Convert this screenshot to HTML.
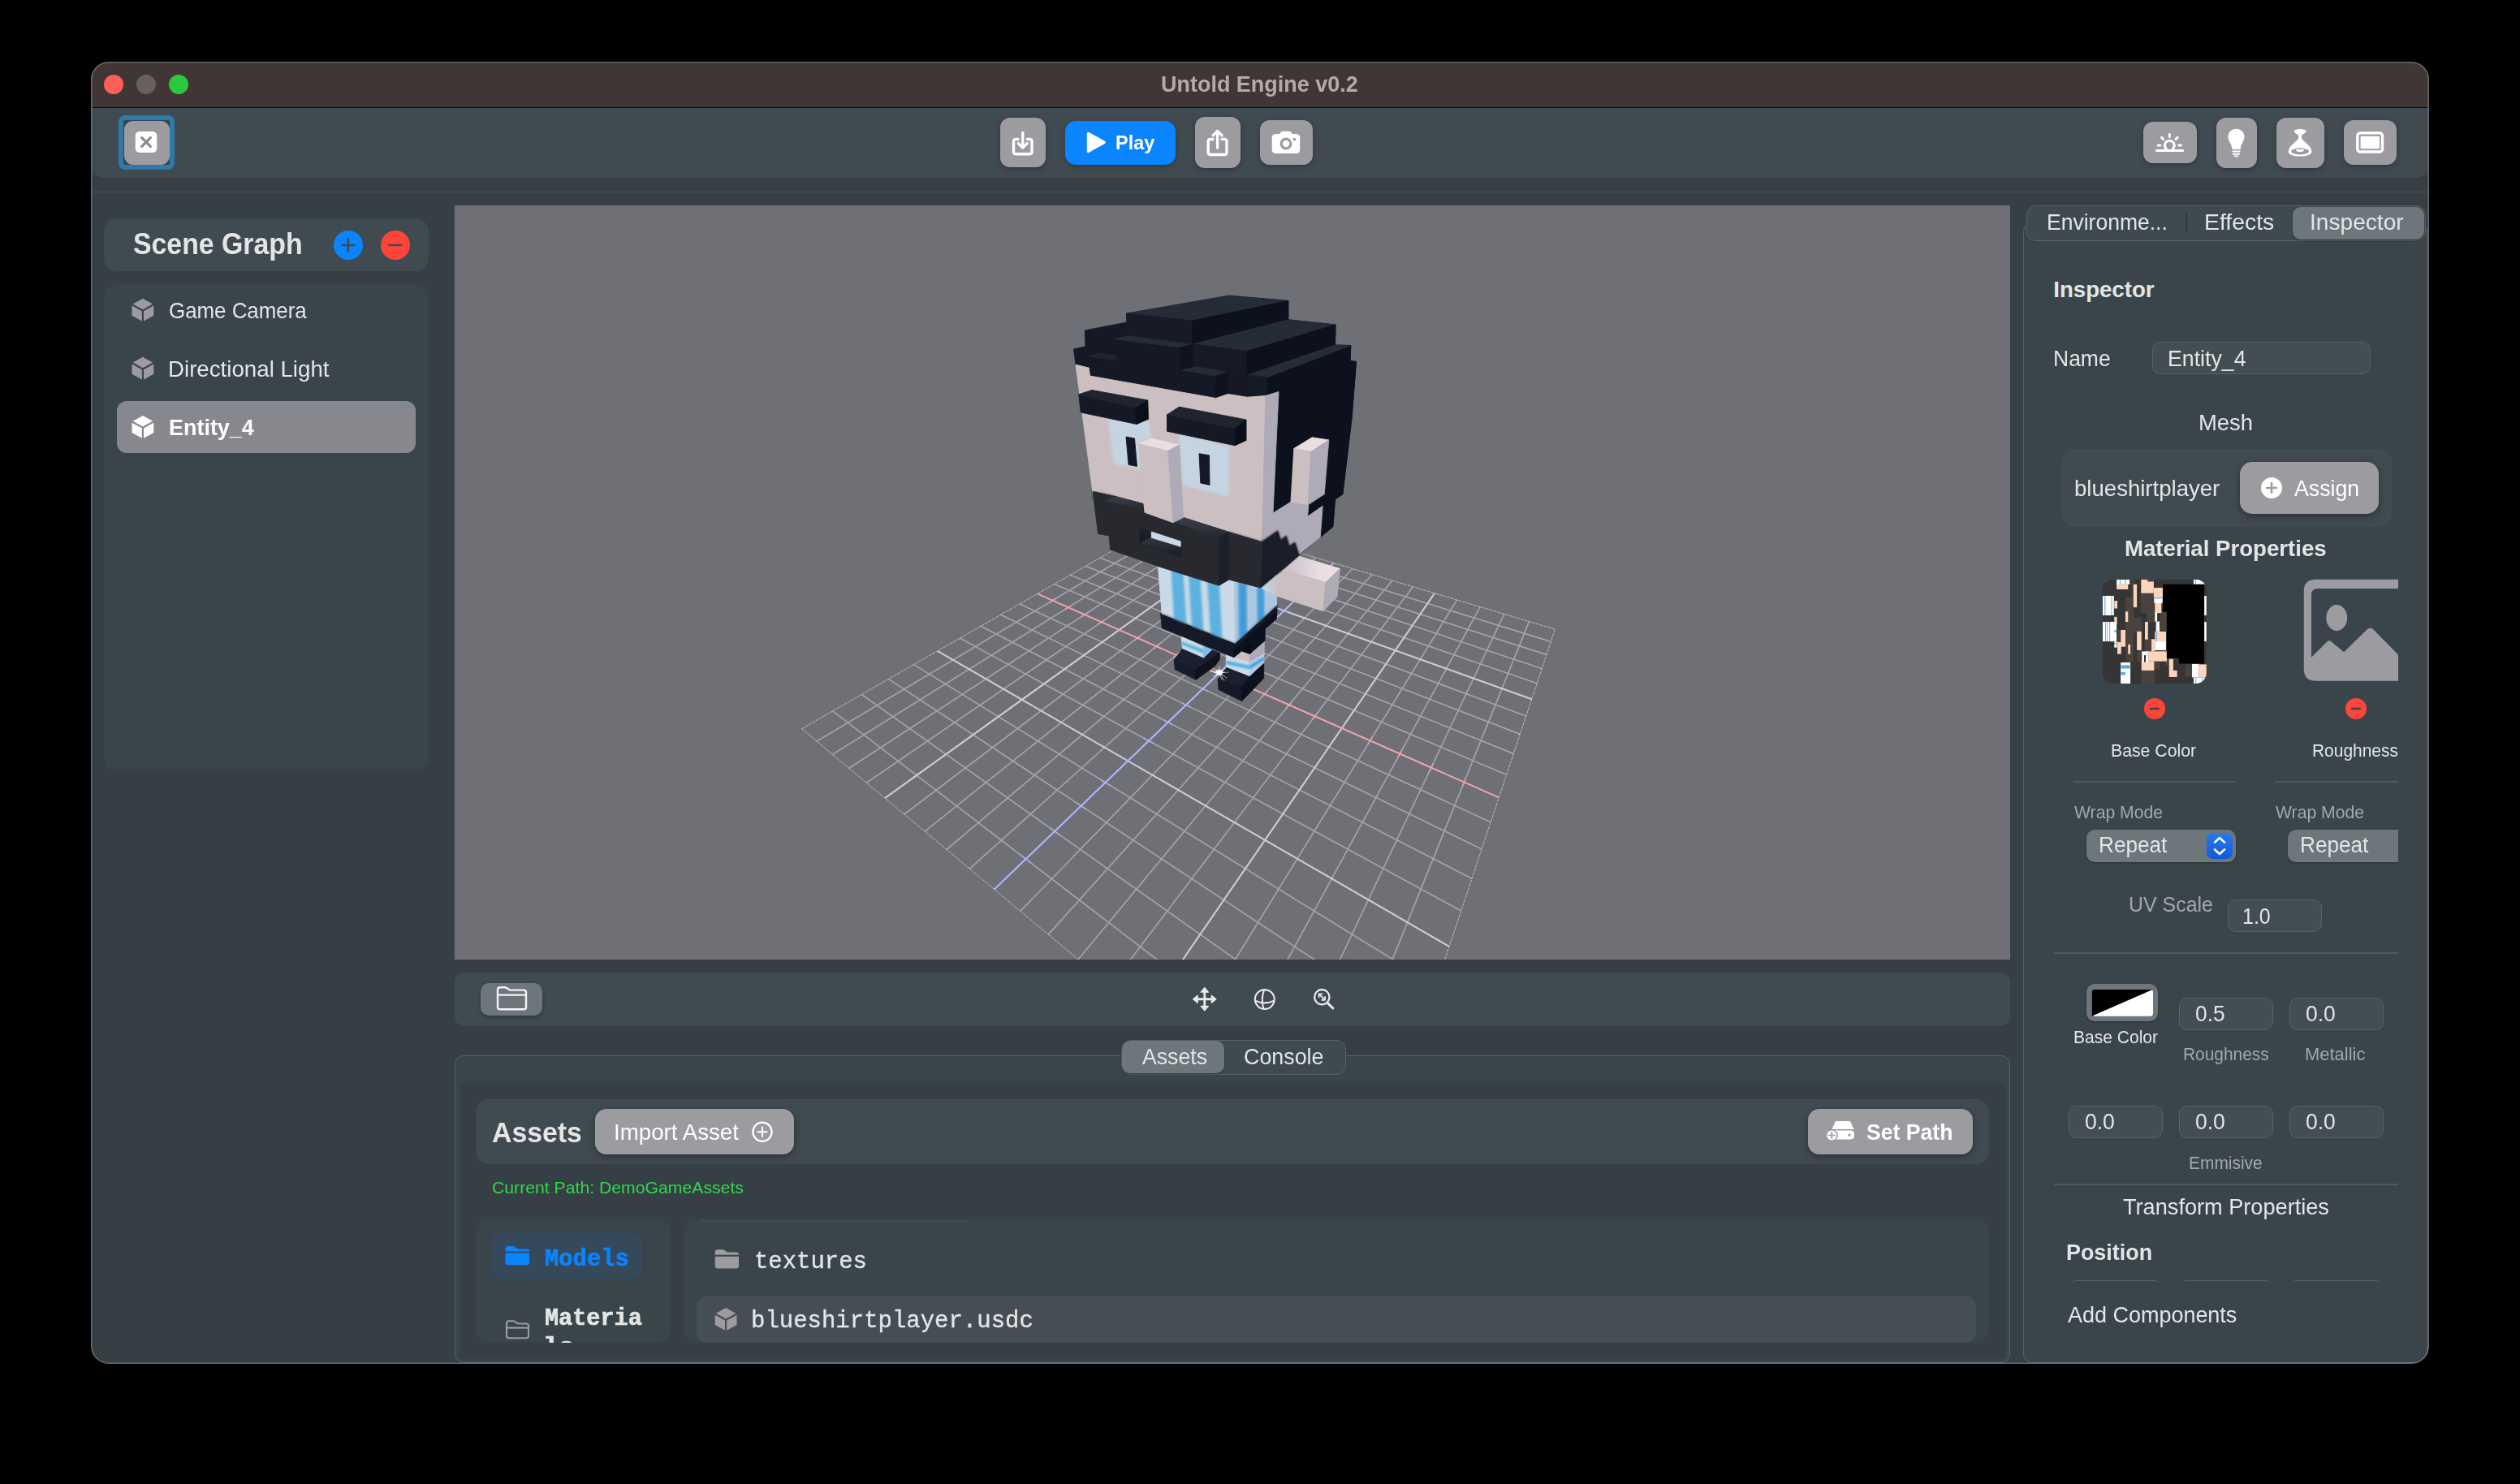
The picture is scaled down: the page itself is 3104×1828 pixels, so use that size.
<!DOCTYPE html>
<html lang="en">
<head>
<meta charset="utf-8">
<title>Untold Engine v0.2</title>
<style>
html,body{margin:0;padding:0;background:#000;}
body{width:3104px;height:1828px;overflow:hidden;position:relative;font-family:"Liberation Sans",sans-serif;}
.a{position:absolute;box-sizing:border-box;}
.t{position:absolute;white-space:pre;line-height:1;transform-origin:0 50%;display:block;}
.s{font-family:"Liberation Sans",sans-serif;}
.m{font-family:"Liberation Mono",monospace;}
.btn{background:#9c9ba0;box-shadow:0 2px 7px rgba(0,0,0,.28);}
.pan{background:#404b51;border-radius:16px;}
.pan2{background:#3a454b;border-radius:16px;}
.fld{background:#434e53;border:1.5px solid #55626a;border-radius:10px;}
.hr{background:#4c595f;height:2px;}
svg{position:absolute;left:0;top:0;overflow:visible;}
</style>
</head>
<body>
<!-- window -->
<div class="a" id="win" style="left:112px;top:76px;width:2880px;height:1603.5px;border-radius:22px;background:#353f45;overflow:hidden;">
<div class="a" style="left:-112px;top:-76px;width:3104px;height:1828px;">
  <!-- title bar -->
  <div class="a" style="left:112px;top:76px;width:2880px;height:56.5px;background:#403634;"></div>
  <div class="a" style="left:112px;top:131.5px;width:2880px;height:1.5px;background:#0b0b0b;"></div>
  <!-- toolbar band -->
  <div class="a" style="left:112.5px;top:133px;width:2878.5px;height:85.75px;background:#404b51;border-radius:0 0 14px 14px;"></div>
  <div class="a" style="left:112px;top:235.5px;width:2880px;height:1.5px;background:#4a575c;"></div>
  <!-- traffic lights -->
  <div class="a" style="left:128px;top:92px;width:24px;height:24px;border-radius:50%;background:#fe5f57;"></div>
  <div class="a" style="left:168px;top:92px;width:24px;height:24px;border-radius:50%;background:#69605e;"></div>
  <div class="a" style="left:208px;top:92px;width:24px;height:24px;border-radius:50%;background:#29c83f;"></div>
  <!-- close (focused) button -->
  <div class="a" style="left:146px;top:142px;width:69px;height:67px;border:6.5px solid #2d7aa8;border-radius:8px;background:#37434a;"></div>
  <div class="a btn" style="left:152.5px;top:148.5px;width:56px;height:54px;border-radius:11px;box-shadow:none;"></div>
  <!-- center buttons -->
  <div class="a btn" style="left:1232px;top:145px;width:56px;height:61px;border-radius:12px;"></div>
  <div class="a btn" style="left:1312px;top:149px;width:136px;height:54px;border-radius:13px;background:#0a84ff;"></div>
  <div class="a btn" style="left:1472px;top:144px;width:56px;height:63px;border-radius:12px;"></div>
  <div class="a btn" style="left:1552px;top:148px;width:65px;height:55px;border-radius:12px;"></div>
  <!-- right buttons -->
  <div class="a btn" style="left:2640px;top:150px;width:66px;height:51px;border-radius:12px;"></div>
  <div class="a btn" style="left:2730px;top:145px;width:50px;height:62px;border-radius:12px;"></div>
  <div class="a btn" style="left:2804px;top:145px;width:59px;height:62px;border-radius:12px;"></div>
  <div class="a btn" style="left:2887px;top:148px;width:65px;height:55px;border-radius:12px;"></div>
  <!-- viewport bg -->
  <div class="a" style="left:560px;top:253px;width:1916px;height:928.75px;background:#6f7076;"></div>
<svg style="position:absolute;left:560px;top:253px;overflow:hidden" width="1916" height="928.75" viewBox="560 253 1916 928.75">
<defs><filter id="b1" x="-10%" y="-10%" width="120%" height="120%"><feGaussianBlur stdDeviation="1.6"/></filter><filter id="b2" x="-10%" y="-10%" width="120%" height="120%"><feGaussianBlur stdDeviation="0.8"/></filter><linearGradient id="gm" x1="0" y1="0" x2="0" y2="1"><stop offset="0" stop-color="#3c4049"/><stop offset="1" stop-color="#25272e"/></linearGradient><linearGradient id="gat" gradientUnits="userSpaceOnUse" x1="1588" y1="700" x2="1626" y2="706"><stop offset="0" stop-color="#ccc5cf"/><stop offset="1" stop-color="#eadfe1"/></linearGradient><linearGradient id="gaf" gradientUnits="userSpaceOnUse" x1="1556" y1="0" x2="1574" y2="0"><stop offset="0" stop-color="#c4d8e6"/><stop offset="1" stop-color="#cbbfc1"/></linearGradient><linearGradient id="gm2" x1="0" y1="0" x2="0.3" y2="1"><stop offset="0" stop-color="#343841"/><stop offset="1" stop-color="#1e212a"/></linearGradient></defs>
<g stroke-linecap="butt">
<line x1="1025.7" y1="875.8" x2="1707.5" y2="1398.4" stroke="#a3a3a7" stroke-width="1.7" stroke-opacity="1" />
<line x1="1006.1" y1="913.1" x2="1463.6" y2="639.8" stroke="#a3a3a7" stroke-width="1.7" stroke-opacity="1" />
<line x1="1061.3" y1="855.5" x2="1730.4" y2="1329.6" stroke="#a3a3a7" stroke-width="1.7" stroke-opacity="1" />
<line x1="1025.5" y1="929.2" x2="1481.2" y2="645.1" stroke="#a3a3a7" stroke-width="1.7" stroke-opacity="1" />
<line x1="1094.5" y1="836.4" x2="1750.7" y2="1268.8" stroke="#a3a3a7" stroke-width="1.7" stroke-opacity="1" />
<line x1="1045.9" y1="946.2" x2="1499.4" y2="650.5" stroke="#a3a3a7" stroke-width="1.7" stroke-opacity="1" />
<line x1="1125.6" y1="818.6" x2="1768.8" y2="1214.5" stroke="#a3a3a7" stroke-width="1.7" stroke-opacity="1" />
<line x1="1067.3" y1="964.2" x2="1518.0" y2="656.1" stroke="#a3a3a7" stroke-width="1.7" stroke-opacity="1" />
<line x1="1182.3" y1="786.1" x2="1799.7" y2="1122.0" stroke="#a3a3a7" stroke-width="1.7" stroke-opacity="1" />
<line x1="1113.9" y1="1003.0" x2="1557.1" y2="667.8" stroke="#a3a3a7" stroke-width="1.7" stroke-opacity="1" />
<line x1="1208.2" y1="771.2" x2="1812.9" y2="1082.2" stroke="#a3a3a7" stroke-width="1.7" stroke-opacity="1" />
<line x1="1139.2" y1="1024.1" x2="1577.5" y2="674.0" stroke="#a3a3a7" stroke-width="1.7" stroke-opacity="1" />
<line x1="1232.7" y1="757.2" x2="1825.0" y2="1045.9" stroke="#a3a3a7" stroke-width="1.7" stroke-opacity="1" />
<line x1="1166.0" y1="1046.5" x2="1598.6" y2="680.3" stroke="#a3a3a7" stroke-width="1.7" stroke-opacity="1" />
<line x1="1255.9" y1="743.9" x2="1836.1" y2="1012.8" stroke="#a3a3a7" stroke-width="1.7" stroke-opacity="1" />
<line x1="1194.4" y1="1070.2" x2="1620.3" y2="686.8" stroke="#a3a3a7" stroke-width="1.7" stroke-opacity="1" />
<line x1="1298.6" y1="719.5" x2="1855.6" y2="954.3" stroke="#a3a3a7" stroke-width="1.7" stroke-opacity="1" />
<line x1="1256.9" y1="1122.4" x2="1666.0" y2="700.5" stroke="#a3a3a7" stroke-width="1.7" stroke-opacity="1" />
<line x1="1318.3" y1="708.2" x2="1864.3" y2="928.4" stroke="#a3a3a7" stroke-width="1.7" stroke-opacity="1" />
<line x1="1291.3" y1="1151.1" x2="1690.0" y2="707.7" stroke="#a3a3a7" stroke-width="1.7" stroke-opacity="1" />
<line x1="1337.1" y1="697.4" x2="1872.3" y2="904.4" stroke="#a3a3a7" stroke-width="1.7" stroke-opacity="1" />
<line x1="1328.1" y1="1181.8" x2="1714.8" y2="715.1" stroke="#a3a3a7" stroke-width="1.7" stroke-opacity="1" />
<line x1="1354.9" y1="687.2" x2="1879.7" y2="882.0" stroke="#a3a3a7" stroke-width="1.7" stroke-opacity="1" />
<line x1="1367.6" y1="1214.8" x2="1740.4" y2="722.8" stroke="#a3a3a7" stroke-width="1.7" stroke-opacity="1" />
<line x1="1388.2" y1="668.1" x2="1893.2" y2="841.7" stroke="#a3a3a7" stroke-width="1.7" stroke-opacity="1" />
<line x1="1455.8" y1="1288.4" x2="1794.5" y2="739.0" stroke="#a3a3a7" stroke-width="1.7" stroke-opacity="1" />
<line x1="1403.8" y1="659.2" x2="1899.2" y2="823.5" stroke="#a3a3a7" stroke-width="1.7" stroke-opacity="1" />
<line x1="1505.3" y1="1329.7" x2="1823.1" y2="747.6" stroke="#a3a3a7" stroke-width="1.7" stroke-opacity="1" />
<line x1="1418.6" y1="650.7" x2="1904.9" y2="806.4" stroke="#a3a3a7" stroke-width="1.7" stroke-opacity="1" />
<line x1="1559.0" y1="1374.6" x2="1852.7" y2="756.4" stroke="#a3a3a7" stroke-width="1.7" stroke-opacity="1" />
<line x1="1432.9" y1="642.5" x2="1910.3" y2="790.4" stroke="#a3a3a7" stroke-width="1.7" stroke-opacity="1" />
<line x1="1617.5" y1="1423.3" x2="1883.4" y2="765.6" stroke="#a3a3a7" stroke-width="1.7" stroke-opacity="1" />
<line x1="987.6" y1="897.7" x2="1681.4" y2="1476.6" stroke="#dedee0" stroke-width="0.9" stroke-opacity="0.75" stroke-dasharray="4 1"/>
<line x1="987.6" y1="897.7" x2="1446.5" y2="634.7" stroke="#dedee0" stroke-width="0.9" stroke-opacity="0.75" stroke-dasharray="4 1"/>
<line x1="1446.5" y1="634.7" x2="1915.4" y2="775.2" stroke="#dedee0" stroke-width="0.9" stroke-opacity="0.75" stroke-dasharray="4 1"/>
<line x1="1681.4" y1="1476.6" x2="1915.4" y2="775.2" stroke="#dedee0" stroke-width="0.9" stroke-opacity="0.75" stroke-dasharray="4 1"/>
<line x1="1154.8" y1="801.8" x2="1785.0" y2="1165.9" stroke="#cdcdd0" stroke-width="2.1" stroke-opacity="1" />
<line x1="1090.0" y1="983.1" x2="1537.3" y2="661.9" stroke="#cdcdd0" stroke-width="2.1" stroke-opacity="1" />
<line x1="1372.0" y1="677.4" x2="1886.7" y2="861.2" stroke="#cdcdd0" stroke-width="2.1" stroke-opacity="1" />
<line x1="1410.1" y1="1250.2" x2="1767.0" y2="730.8" stroke="#cdcdd0" stroke-width="2.1" stroke-opacity="1" />
<line x1="1277.8" y1="731.4" x2="1846.3" y2="982.4" stroke="#f0a6ae" stroke-width="1.9" stroke-opacity="1" />
<line x1="1224.7" y1="1095.5" x2="1642.8" y2="693.5" stroke="#b4b3fb" stroke-width="2.1" stroke-opacity="1" />
<line x1="1292.2" y1="742.2" x2="1300.7" y2="737.1" stroke="#f2a6ad" stroke-width="1.7" stroke-opacity="0.6" />
<line x1="1257.4" y1="1053.4" x2="1269.8" y2="1062.9" stroke="#b0b0f4" stroke-width="1.7" stroke-opacity="0.6" />
<line x1="1311.6" y1="750.8" x2="1320.0" y2="745.6" stroke="#f2a6ad" stroke-width="1.7" stroke-opacity="0.6" />
<line x1="1293.0" y1="1019.7" x2="1305.2" y2="1028.4" stroke="#b0b0f4" stroke-width="1.7" stroke-opacity="0.6" />
<line x1="1331.8" y1="759.8" x2="1340.1" y2="754.4" stroke="#f2a6ad" stroke-width="1.7" stroke-opacity="0.6" />
<line x1="1325.6" y1="988.7" x2="1337.7" y2="996.7" stroke="#b0b0f4" stroke-width="1.7" stroke-opacity="0.6" />
<line x1="1352.7" y1="769.1" x2="1361.0" y2="763.5" stroke="#f2a6ad" stroke-width="1.7" stroke-opacity="0.6" />
<line x1="1355.6" y1="960.2" x2="1367.6" y2="967.6" stroke="#b0b0f4" stroke-width="1.7" stroke-opacity="0.6" />
<line x1="1374.4" y1="778.8" x2="1382.6" y2="772.9" stroke="#f2a6ad" stroke-width="1.7" stroke-opacity="0.6" />
<line x1="1383.4" y1="933.9" x2="1395.2" y2="940.7" stroke="#b0b0f4" stroke-width="1.7" stroke-opacity="0.6" />
<line x1="1397.0" y1="788.9" x2="1405.1" y2="782.8" stroke="#f2a6ad" stroke-width="1.7" stroke-opacity="0.6" />
<line x1="1409.1" y1="909.5" x2="1420.7" y2="915.8" stroke="#b0b0f4" stroke-width="1.7" stroke-opacity="0.6" />
<line x1="1420.5" y1="799.4" x2="1428.5" y2="793.0" stroke="#f2a6ad" stroke-width="1.7" stroke-opacity="0.6" />
<line x1="1433.0" y1="886.8" x2="1444.4" y2="892.7" stroke="#b0b0f4" stroke-width="1.7" stroke-opacity="0.6" />
<line x1="1445.0" y1="810.3" x2="1452.8" y2="803.7" stroke="#f2a6ad" stroke-width="1.7" stroke-opacity="0.6" />
<line x1="1455.3" y1="865.7" x2="1466.5" y2="871.2" stroke="#b0b0f4" stroke-width="1.7" stroke-opacity="0.6" />
<line x1="1470.5" y1="821.7" x2="1478.2" y2="814.8" stroke="#f2a6ad" stroke-width="1.7" stroke-opacity="0.6" />
<line x1="1476.1" y1="846.0" x2="1487.1" y2="851.1" stroke="#b0b0f4" stroke-width="1.7" stroke-opacity="0.6" />
<line x1="1525.0" y1="845.9" x2="1532.3" y2="838.4" stroke="#f2a6ad" stroke-width="1.7" stroke-opacity="0.6" />
<line x1="1513.8" y1="810.2" x2="1524.5" y2="814.7" stroke="#b0b0f4" stroke-width="1.7" stroke-opacity="0.6" />
<line x1="1554.0" y1="858.9" x2="1561.1" y2="851.0" stroke="#f2a6ad" stroke-width="1.7" stroke-opacity="0.6" />
<line x1="1531.0" y1="793.9" x2="1541.4" y2="798.2" stroke="#b0b0f4" stroke-width="1.7" stroke-opacity="0.6" />
<line x1="1584.4" y1="872.4" x2="1591.3" y2="864.2" stroke="#f2a6ad" stroke-width="1.7" stroke-opacity="0.6" />
<line x1="1547.1" y1="778.6" x2="1557.4" y2="782.6" stroke="#b0b0f4" stroke-width="1.7" stroke-opacity="0.6" />
<line x1="1616.3" y1="886.6" x2="1622.8" y2="878.0" stroke="#f2a6ad" stroke-width="1.7" stroke-opacity="0.6" />
<line x1="1562.3" y1="764.2" x2="1572.5" y2="767.9" stroke="#b0b0f4" stroke-width="1.7" stroke-opacity="0.6" />
<line x1="1649.7" y1="901.5" x2="1655.9" y2="892.5" stroke="#f2a6ad" stroke-width="1.7" stroke-opacity="0.6" />
<line x1="1576.7" y1="750.5" x2="1586.7" y2="754.1" stroke="#b0b0f4" stroke-width="1.7" stroke-opacity="0.6" />
<line x1="1684.7" y1="917.1" x2="1690.6" y2="907.6" stroke="#f2a6ad" stroke-width="1.7" stroke-opacity="0.6" />
<line x1="1590.4" y1="737.6" x2="1600.1" y2="740.9" stroke="#b0b0f4" stroke-width="1.7" stroke-opacity="0.6" />
<line x1="1721.6" y1="933.5" x2="1727.0" y2="923.6" stroke="#f2a6ad" stroke-width="1.7" stroke-opacity="0.6" />
<line x1="1603.3" y1="725.3" x2="1612.9" y2="728.5" stroke="#b0b0f4" stroke-width="1.7" stroke-opacity="0.6" />
<line x1="1760.3" y1="950.8" x2="1765.3" y2="940.3" stroke="#f2a6ad" stroke-width="1.7" stroke-opacity="0.6" />
<line x1="1615.5" y1="713.7" x2="1625.0" y2="716.7" stroke="#b0b0f4" stroke-width="1.7" stroke-opacity="0.6" />
<line x1="1801.2" y1="969.0" x2="1805.7" y2="958.0" stroke="#f2a6ad" stroke-width="1.7" stroke-opacity="0.6" />
<line x1="1627.2" y1="702.7" x2="1636.5" y2="705.5" stroke="#b0b0f4" stroke-width="1.7" stroke-opacity="0.6" />
</g>
<g>
<polygon points="1446.3,812.7 1456.6,798.9 1482.7,810.1 1492.6,800.6 1502.4,804.4 1472.6,824.6" fill="#1b2030" stroke="#1b2030" stroke-width="0.9" stroke-linejoin="round" />
<polygon points="1446.3,812.7 1472.6,824.6 1473.0,837.3 1447.2,824.6" fill="#181c29" stroke="#181c29" stroke-width="0.9" stroke-linejoin="round" />
<polygon points="1472.6,824.6 1502.4,804.4 1502.2,812.7 1496.2,820.6 1473.0,837.3" fill="#0e121c" stroke="#0e121c" stroke-width="0.9" stroke-linejoin="round" />
<polygon points="1455.1,783.8 1482.7,796.8 1482.7,810.1 1456.4,798.5" fill="#c9dcea" stroke="#c9dcea" stroke-width="0.9" stroke-linejoin="round" />
<polygon points="1455.4,790.4 1482.7,800.5 1482.7,804.4 1455.9,793.9" fill="#5db2e0" stroke="#5db2e0" stroke-width="0.9" stroke-linejoin="round" filter="url(#b2)"/>
<polygon points="1482.7,796.8 1492.6,800.6 1482.7,810.1" fill="#7cc0e6" stroke="#7cc0e6" stroke-width="0.9" stroke-linejoin="round" />
<polygon points="1519.9,810.1 1529.6,801.5 1539.2,805.4 1539.2,816.7 1510.3,807.7 1510.3,806.6" fill="#cbbfc1" stroke="#cbbfc1" stroke-width="0.9" stroke-linejoin="round" />
<polygon points="1539.2,805.4 1557.4,790.1 1557.1,805.6 1539.2,816.7" fill="#aeaab7" stroke="#aeaab7" stroke-width="0.9" stroke-linejoin="round" />
<polygon points="1510.3,807.3 1539.2,816.1 1539.2,833.6 1510.3,822.2" fill="#c9dcea" stroke="#c9dcea" stroke-width="0.9" stroke-linejoin="round" />
<polygon points="1510.3,814.1 1539.2,820.2 1539.2,824.0 1510.3,817.8" fill="#58afe0" stroke="#58afe0" stroke-width="0.9" stroke-linejoin="round" filter="url(#b2)"/>
<polygon points="1539.2,816.1 1557.1,805.3 1556.7,817.3 1539.2,833.6" fill="#b5cde4" stroke="#b5cde4" stroke-width="0.9" stroke-linejoin="round" />
<polygon points="1539.2,820.2 1557.0,809.2 1556.9,812.9 1539.2,824.0" fill="#4a9edb" stroke="#4a9edb" stroke-width="0.9" stroke-linejoin="round" filter="url(#b2)"/>
<polygon points="1500.2,836.8 1510.3,822.2 1539.2,833.6 1529.6,845.6" fill="#1b2030" stroke="#1b2030" stroke-width="0.9" stroke-linejoin="round" />
<polygon points="1500.2,836.8 1529.6,845.6 1529.6,863.6 1501.1,849.6" fill="#161a27" stroke="#161a27" stroke-width="0.9" stroke-linejoin="round" />
<polygon points="1529.6,845.6 1539.2,833.6 1556.7,817.3 1556.7,835.4 1529.6,863.6" fill="#0c111c" stroke="#0c111c" stroke-width="0.9" stroke-linejoin="round" />
<polygon points="1429.6,755.8 1519.9,791.3 1519.9,809.7 1431.4,773.7" fill="#151a28" stroke="#151a28" stroke-width="0.9" stroke-linejoin="round" />
<polygon points="1519.9,791.3 1572.9,744.8 1572.5,762.3 1558.3,775.1 1558.0,789.1 1539.6,805.3 1529.6,801.8 1519.9,809.7" fill="#0b111f" stroke="#0b111f" stroke-width="0.9" stroke-linejoin="round" />
<polygon points="1530.0,801.2 1539.6,792.8 1539.6,805.3 1529.6,801.8" fill="#070b15" stroke="#070b15" stroke-width="0.9" stroke-linejoin="round" />
<polygon points="1426.2,695.0 1501.2,721.2 1513.8,713.8 1520.5,715.0 1521.5,792.5 1431.2,756.2" fill="#c9d9e7" stroke="#c9d9e7" stroke-width="0.9" stroke-linejoin="round" />
<polygon points="1520.5,715.0 1552.5,723.8 1573.0,706.2 1572.5,746.2 1521.5,792.5" fill="#aac6e1" stroke="#aac6e1" stroke-width="0.9" stroke-linejoin="round" />
<polygon points="1443.0,700.5 1457.0,705.5 1461.0,769.5 1446.5,763.0" fill="#5bb1de" stroke="#5bb1de" stroke-width="0.9" stroke-linejoin="round" filter="url(#b1)"/>
<polygon points="1464.5,708.0 1478.0,713.0 1482.0,777.5 1468.5,772.0" fill="#5bb1de" stroke="#5bb1de" stroke-width="0.9" stroke-linejoin="round" filter="url(#b1)"/>
<polygon points="1487.5,716.5 1501.5,721.0 1505.0,787.0 1491.5,781.2" fill="#5bb1de" stroke="#5bb1de" stroke-width="0.9" stroke-linejoin="round" filter="url(#b1)"/>
<polygon points="1525.8,716.5 1535.0,719.0 1535.5,780.0 1526.5,788.0" fill="#3f9cd9" stroke="#3f9cd9" stroke-width="0.9" stroke-linejoin="round" filter="url(#b1)"/>
<polygon points="1548.8,722.5 1556.5,720.5 1557.0,760.5 1549.5,767.5" fill="#3f9cd9" stroke="#3f9cd9" stroke-width="0.9" stroke-linejoin="round" filter="url(#b1)"/>
<polygon points="1431.2,757.0 1521.2,793.8 1572.5,747.0 1572.5,752.5 1521.2,799.5 1431.2,762.5" fill="#121827" stroke="#121827" stroke-width="0.9" stroke-linejoin="round" filter="url(#b1)"/>
<polygon points="1600.0,685.2 1650.5,700.5 1632.8,717.5 1581.5,702.0" fill="url(#gat)" stroke="url(#gat)" stroke-width="0.9" stroke-linejoin="round" />
<polygon points="1553.2,724.5 1581.5,702.0 1632.8,717.5 1630.0,752.8 1573.5,734.5" fill="url(#gaf)" stroke="url(#gaf)" stroke-width="0.9" stroke-linejoin="round" />
<polygon points="1632.8,717.5 1650.5,700.5 1647.0,735.0 1630.0,752.8" fill="#aeaab7" stroke="#aeaab7" stroke-width="0.9" stroke-linejoin="round" />
</g>
<g>
<polygon points="1325.0,449.2 1322.5,430.0 1337.0,426.8 1336.2,407.0 1388.0,397.0 1387.5,386.2 1513.8,364.2 1586.8,370.5 1586.8,393.8 1645.0,400.0 1644.5,425.0 1663.8,425.5 1663.0,444.5 1670.5,445.5 1665.0,515.0 1653.8,608.8 1644.5,615.0 1641.8,648.8 1626.2,661.8 1552.5,723.8 1552.5,667.5 1536.2,493.8 1497.5,493.8 1342.5,466.2" fill="#151926" stroke="#151926" stroke-width="0.9" stroke-linejoin="round" />
<polygon points="1560.0,465.0 1663.8,425.5 1663.0,444.5 1670.5,445.5 1665.0,515.0 1653.8,608.8 1644.5,615.0 1641.8,648.8 1626.2,661.8 1629.2,623.2 1610.5,636.2 1611.8,622.0 1590.0,618.2 1568.0,632.0 1575.0,482.5 1560.0,486.2" fill="#0c111d" stroke="#0c111d" stroke-width="0.9" stroke-linejoin="round" />
<polygon points="1387.5,386.2 1513.8,364.2 1586.8,370.5 1468.8,395.0" fill="#262b38" stroke="#262b38" stroke-width="0.9" stroke-linejoin="round" />
<polygon points="1387.5,386.2 1468.8,395.0 1468.8,423.8 1388.8,413.8" fill="#171b28" stroke="#171b28" stroke-width="0.9" stroke-linejoin="round" />
<polygon points="1468.8,395.0 1586.8,370.5 1586.8,393.8 1468.8,423.8" fill="#0c111d" stroke="#0c111d" stroke-width="0.9" stroke-linejoin="round" />
<polygon points="1468.8,423.8 1586.8,393.8 1645.0,400.0 1536.2,432.5" fill="#262b38" stroke="#262b38" stroke-width="0.9" stroke-linejoin="round" />
<polygon points="1468.8,423.8 1536.2,432.5 1536.2,460.0 1468.8,451.2" fill="#161a27" stroke="#161a27" stroke-width="0.9" stroke-linejoin="round" />
<polygon points="1536.2,432.5 1645.0,400.0 1644.5,425.0 1536.2,462.0" fill="#0c111d" stroke="#0c111d" stroke-width="0.9" stroke-linejoin="round" />
<polygon points="1372.0,417.5 1389.5,413.8 1468.8,424.2 1453.8,428.0" fill="#262b38" stroke="#262b38" stroke-width="0.9" stroke-linejoin="round" />
<polygon points="1453.8,428.0 1468.8,424.2 1468.8,451.2 1454.5,455.5" fill="#0e131f" stroke="#0e131f" stroke-width="0.9" stroke-linejoin="round" />
<polygon points="1340.0,438.8 1353.8,435.0 1375.0,438.0 1374.5,444.0" fill="#20242f" stroke="#20242f" stroke-width="0.9" stroke-linejoin="round" />
<polygon points="1455.5,455.8 1473.8,451.8 1512.0,458.2 1497.5,463.2" fill="#262b38" stroke="#262b38" stroke-width="0.9" stroke-linejoin="round" />
<polygon points="1497.5,463.2 1512.0,458.2 1512.5,485.5 1497.5,490.5" fill="#0e131f" stroke="#0e131f" stroke-width="0.9" stroke-linejoin="round" />
<polygon points="1536.2,462.0 1644.5,425.0 1663.8,425.5 1560.0,465.0" fill="#262b38" stroke="#262b38" stroke-width="0.9" stroke-linejoin="round" />
<polygon points="1536.2,462.0 1560.0,465.0 1560.0,487.5 1536.2,489.2" fill="#161a27" stroke="#161a27" stroke-width="0.9" stroke-linejoin="round" />
<polygon points="1325.0,449.2 1341.2,453.0 1342.5,463.0 1497.5,490.5 1512.5,485.5 1536.2,489.2 1558.8,487.5 1555.5,640.0 1553.8,672.5 1346.2,608.8" fill="#cbbfc1" stroke="#cbbfc1" stroke-width="0.9" stroke-linejoin="round" />
<polygon points="1558.8,487.5 1575.0,482.5 1568.0,632.0 1590.0,618.2 1611.8,622.0 1610.5,636.2 1629.2,623.2 1626.2,661.8 1600.0,683.0 1595.0,668.0 1588.0,672.5 1584.5,660.0 1577.5,665.0 1573.8,653.8 1553.8,667.5 1555.5,640.0" fill="#aeaab7" stroke="#aeaab7" stroke-width="0.9" stroke-linejoin="round" />
<polygon points="1553.8,667.5 1573.8,653.8 1577.5,665.0 1584.5,660.0 1588.0,672.5 1595.0,668.0 1600.0,683.0 1552.5,723.8" fill="#1a1e29" stroke="#1a1e29" stroke-width="0.9" stroke-linejoin="round" filter="url(#b2)"/>
<polygon points="1553.8,672.5 1572.5,662.5 1595.0,682.5 1600.0,683.5 1552.5,723.8" fill="#1a1e29" stroke="#1a1e29" stroke-width="0.9" stroke-linejoin="round" />
<polygon points="1593.8,552.5 1616.2,538.8 1636.8,542.0 1615.0,556.2" fill="#e9dee0" stroke="#e9dee0" stroke-width="0.9" stroke-linejoin="round" />
<polygon points="1593.8,552.5 1615.0,556.2 1611.2,621.8 1590.0,618.2" fill="#cbbfc1" stroke="#cbbfc1" stroke-width="0.9" stroke-linejoin="round" />
<polygon points="1615.0,556.2 1636.8,542.0 1631.2,608.8 1611.2,621.8" fill="#aeaab7" stroke="#aeaab7" stroke-width="0.9" stroke-linejoin="round" />
<polygon points="1365.0,516.2 1415.0,519.5 1418.0,538.8 1403.8,546.2 1405.0,578.0 1372.5,571.2" fill="#c6d4e1" stroke="#c6d4e1" stroke-width="0.9" stroke-linejoin="round" filter="url(#b1)"/>
<polygon points="1387.0,538.0 1397.5,540.0 1400.5,574.5 1390.0,572.5" fill="#151926" stroke="#151926" stroke-width="0.9" stroke-linejoin="round" />
<polygon points="1452.5,535.0 1513.8,550.5 1513.8,611.2 1457.5,597.5" fill="#c6d4e1" stroke="#c6d4e1" stroke-width="0.9" stroke-linejoin="round" filter="url(#b1)"/>
<polygon points="1477.0,558.8 1489.5,560.8 1490.0,597.5 1478.8,595.0" fill="#151926" stroke="#151926" stroke-width="0.9" stroke-linejoin="round" />
<polygon points="1328.8,485.8 1398.8,502.0 1400.0,522.5 1331.2,508.0" fill="#151926" stroke="#151926" stroke-width="0.9" stroke-linejoin="round" />
<polygon points="1328.8,485.8 1345.0,480.5 1413.8,493.0 1398.8,502.0" fill="#20242f" stroke="#20242f" stroke-width="0.9" stroke-linejoin="round" />
<polygon points="1398.8,502.0 1413.8,493.0 1414.5,516.2 1400.0,522.5" fill="#0a0f1b" stroke="#0a0f1b" stroke-width="0.9" stroke-linejoin="round" />
<polygon points="1437.5,510.8 1521.2,527.5 1521.2,548.8 1437.5,531.2" fill="#151926" stroke="#151926" stroke-width="0.9" stroke-linejoin="round" />
<polygon points="1437.5,510.8 1452.5,501.2 1535.0,517.0 1521.2,527.5" fill="#20242f" stroke="#20242f" stroke-width="0.9" stroke-linejoin="round" />
<polygon points="1521.2,527.5 1535.0,517.0 1535.0,542.5 1521.2,548.8" fill="#0a0f1b" stroke="#0a0f1b" stroke-width="0.9" stroke-linejoin="round" />
<polygon points="1346.2,605.5 1375.0,611.8 1408.0,620.5 1410.0,631.2 1445.0,643.8 1457.5,637.5 1513.8,655.5 1553.8,667.5 1552.5,723.8 1513.8,713.8 1501.2,721.2 1426.2,697.5 1367.5,677.0 1366.2,660.0 1352.5,657.5" fill="#27292f" stroke="#27292f" stroke-width="0.9" stroke-linejoin="round" />
<polygon points="1346.0,606.0 1375.0,612.5 1375.0,618.0 1347.5,614.5" fill="#27292f" stroke="#27292f" stroke-width="0.9" stroke-linejoin="round" filter="url(#b1)"/>
<polygon points="1513.8,656.0 1553.8,668.0 1553.8,690.0 1513.8,680.0" fill="#27292f" stroke="#27292f" stroke-width="0.9" stroke-linejoin="round" filter="url(#b1)"/>
<polygon points="1513.8,664.0 1553.8,676.0 1552.5,723.8 1513.8,713.8" fill="#27292f" stroke="#27292f" stroke-width="0.9" stroke-linejoin="round" />
<polygon points="1362.5,617.0 1375.0,611.8 1408.0,620.5 1408.8,628.0" fill="url(#gm)" stroke="url(#gm)" stroke-width="0.9" stroke-linejoin="round" />
<polygon points="1448.8,643.8 1457.5,637.5 1513.8,655.5 1501.2,662.5" fill="url(#gm)" stroke="url(#gm)" stroke-width="0.9" stroke-linejoin="round" />
<polygon points="1501.2,662.5 1513.8,655.5 1513.8,713.8 1501.2,721.2" fill="#1c202a" stroke="#1c202a" stroke-width="0.9" stroke-linejoin="round" />
<polygon points="1402.5,546.8 1418.0,540.0 1452.5,548.0 1438.8,555.5" fill="#e9dee0" stroke="#e9dee0" stroke-width="0.9" stroke-linejoin="round" />
<polygon points="1402.5,546.8 1438.8,555.5 1445.0,643.8 1410.0,631.2" fill="#cbbfc1" stroke="#cbbfc1" stroke-width="0.9" stroke-linejoin="round" />
<polygon points="1438.8,555.5 1452.5,548.0 1457.5,637.5 1445.0,643.8" fill="#aeaab7" stroke="#aeaab7" stroke-width="0.9" stroke-linejoin="round" />
<polygon points="1403.8,651.2 1455.0,666.2 1455.0,686.2 1403.8,668.8" fill="#1b1e26" stroke="#1b1e26" stroke-width="0.9" stroke-linejoin="round" />
<polygon points="1405.3,668.5 1418.3,662.3 1454.2,673.3 1454.8,686.1" fill="url(#gm2)" stroke="url(#gm2)" stroke-width="0.9" stroke-linejoin="round" />
<polygon points="1418.3,655.1 1454.2,666.8 1454.2,673.3 1418.3,662.3" fill="#c9d9e7" stroke="#c9d9e7" stroke-width="0.9" stroke-linejoin="round" />
</g>
<g stroke="#f4f4f4" stroke-width="0.9" stroke-linecap="round">
<line x1="1501.9" y1="828.2" x2="1490.9" y2="827.2" stroke-opacity=".7"/>
<line x1="1501.9" y1="828.2" x2="1512.9" y2="828.2" stroke-opacity=".7"/>
<line x1="1501.9" y1="828.2" x2="1493.9" y2="823.2" stroke-opacity=".7"/>
<line x1="1501.9" y1="828.2" x2="1509.9" y2="823.2" stroke-opacity=".7"/>
<line x1="1501.9" y1="828.2" x2="1494.9" y2="833.2" stroke-opacity=".7"/>
<line x1="1501.9" y1="828.2" x2="1510.9" y2="835.2" stroke-opacity=".7"/>
<line x1="1501.9" y1="828.2" x2="1504.9" y2="837.2" stroke-opacity=".7"/>
<line x1="1501.9" y1="828.2" x2="1501.9" y2="821.2" stroke-opacity=".7"/>
<line x1="1501.9" y1="828.2" x2="1507.9" y2="838.2" stroke-opacity=".7"/>
<polygon points="1509.3,828.2 1505.1,829.2 1506.5,831.6 1503.2,830.6 1501.9,833.0 1500.6,830.6 1497.3,831.6 1498.7,829.2 1494.5,828.2 1498.7,827.2 1497.3,824.8 1500.6,825.8 1501.9,823.4 1503.2,825.8 1506.5,824.8 1505.1,827.2" fill="#ffffff" stroke="none"/></g>
</svg>
  <!-- left: scene graph -->
  <div class="a pan" style="left:128px;top:269px;width:400px;height:65px;"></div>
  <div class="a" style="left:410.9px;top:284px;width:36px;height:36px;border-radius:50%;background:#0a84ff;"></div>
  <div class="a" style="left:469px;top:284px;width:36px;height:36px;border-radius:50%;background:#ff453a;"></div>
  <div class="a pan2" style="left:128px;top:350px;width:400px;height:600px;"></div>
  <div class="a" style="left:144px;top:494px;width:368px;height:64px;border-radius:12px;background:#87888d;"></div>
  <!-- viewport tool strip -->
  <div class="a" style="left:560px;top:1198px;width:1916px;height:65.75px;background:#404b51;border-radius:12px;"></div>
  <div class="a" style="left:592px;top:1211px;width:76px;height:40px;border-radius:10px;background:#6d777b;box-shadow:0 2px 5px rgba(0,0,0,.3);"></div>
  <!-- assets group box -->
  <div class="a" style="left:560px;top:1300px;width:1916px;height:378.5px;background:#3a454b;border:1.5px solid #56636a;border-radius:11px;"></div>
  <div class="a" style="left:565.75px;top:1333.75px;width:1904.5px;height:340px;background:#353f45;"></div>
  <!-- tab bar -->
  <div class="a" style="left:1380.5px;top:1280.5px;width:277px;height:43.25px;background:#3e4a50;border:1.5px solid #56636a;border-radius:12px;"></div>
  <div class="a" style="left:1382px;top:1282.25px;width:126px;height:39.75px;background:#6d777b;border-radius:10px;box-shadow:0 1px 3px rgba(0,0,0,.3);"></div>
  <!-- assets header -->
  <div class="a pan" style="left:586.25px;top:1353.75px;width:1863.25px;height:80px;"></div>
  <div class="a btn" style="left:733px;top:1366px;width:245px;height:55.75px;border-radius:14px;box-shadow:0 3px 10px rgba(0,0,0,.35);"></div>
  <div class="a btn" style="left:2227px;top:1366px;width:202.5px;height:55.75px;border-radius:14px;box-shadow:0 3px 10px rgba(0,0,0,.35);"></div>
  <!-- folder panel -->
  <div class="a pan2" style="left:586.25px;top:1502px;width:240px;height:151.75px;overflow:hidden;">
    <div class="a" style="left:18.25px;top:16px;width:186.25px;height:57.75px;border-radius:14px;background:#35495b;"></div>
  </div>
  <!-- file panel -->
  <div class="a pan2" style="left:842px;top:1502px;width:1607.5px;height:151.75px;overflow:hidden;">
    <div class="a" style="left:16px;top:94.25px;width:1576.25px;height:57.5px;border-radius:14px;background:#464e55;"></div>
    <div class="a" style="left:16px;top:-10px;width:339px;height:13.5px;border-radius:0 0 10px 10px;background:#404b51;"></div>
  </div>
  <!-- inspector group box -->
  <div class="a" style="left:2492px;top:274px;width:498px;height:1404.5px;background:#3a454b;border:1.5px solid #56636a;border-radius:11px;"></div>
  <!-- tabs -->
  <div class="a" style="left:2496.25px;top:253px;width:491.25px;height:43.5px;background:#3e4a50;border:1.5px solid #56636a;border-radius:12px;"></div>
  <div class="a" style="left:2824px;top:255px;width:162.25px;height:40px;background:#6d777b;border-radius:10px;box-shadow:0 1px 3px rgba(0,0,0,.3);"></div>
  <div class="a" style="left:2692.25px;top:263px;width:1.5px;height:23px;background:#2d373c;"></div>
  <!-- name field -->
  <div class="a fld" style="left:2651px;top:421.25px;width:268.75px;height:39.5px;"></div>
  <!-- mesh row -->
  <div class="a pan" style="left:2539px;top:553px;width:407px;height:95.5px;"></div>
  <div class="a btn" style="left:2759px;top:569px;width:171px;height:64px;border-radius:15px;box-shadow:0 3px 10px rgba(0,0,0,.35);"></div>
  <!-- scroll clip region -->
  <div class="a" style="left:2530px;top:700px;width:424px;height:900px;overflow:hidden;">
   <div class="a" style="left:-2530px;top:-700px;width:3104px;height:1828px;">
    <!-- thumbnail placeholder (svg drawn in icons) -->
    <div class="a" style="left:2554px;top:962px;width:200px;height:2px;background:#4c595f;"></div>
    <div class="a" style="left:2802px;top:962px;width:200px;height:2px;background:#4c595f;"></div>
    <div class="a" style="left:2570px;top:1022px;width:184px;height:40px;border-radius:10px;background:#6d777b;box-shadow:0 1px 3px rgba(0,0,0,.3);"></div>
    <div class="a" style="left:2717.75px;top:1025.75px;width:32.5px;height:32.5px;border-radius:8px;background:linear-gradient(#2a78f0,#0f5bd6);"></div>
    <div class="a" style="left:2818px;top:1022px;width:184px;height:40px;border-radius:10px;background:#6d777b;box-shadow:0 1px 3px rgba(0,0,0,.3);"></div>
    <div class="a" style="left:2530px;top:1172.5px;width:424px;height:2px;background:#4c595f;"></div>
    <div class="a" style="left:2530px;top:1458px;width:424px;height:2px;background:#4c595f;"></div>
   </div>
  </div>
  <!-- fields -->
  <div class="a fld" style="left:2744px;top:1108.25px;width:115.75px;height:39.25px;"></div>
  <div class="a" style="left:2570.25px;top:1212px;width:87.5px;height:46px;border-radius:10px;background:#6d777b;box-shadow:0 1px 3px rgba(0,0,0,.35);"></div>
  <div class="a fld" style="left:2684px;top:1229.25px;width:115.75px;height:39.5px;"></div>
  <div class="a fld" style="left:2820px;top:1229.25px;width:115.75px;height:39.5px;"></div>
  <div class="a fld" style="left:2548px;top:1362.25px;width:115.75px;height:39.5px;"></div>
  <div class="a fld" style="left:2684px;top:1362.25px;width:115.75px;height:39.5px;"></div>
  <div class="a fld" style="left:2820px;top:1362.25px;width:115.75px;height:39.5px;"></div>
  <!-- position fields peeking (clipped) -->
  <div class="a" style="left:2540px;top:1576.6px;width:410px;height:2.2px;overflow:hidden;">
    <div class="a fld" style="left:8px;top:0;width:115.75px;height:40px;background:transparent;"></div>
    <div class="a fld" style="left:144px;top:0;width:115.75px;height:40px;background:transparent;"></div>
    <div class="a fld" style="left:280px;top:0;width:115.75px;height:40px;background:transparent;"></div>
  </div>
</div>
</div>
<!-- window border highlight -->
<div class="a" style="left:112px;top:76px;width:2880px;height:1603.5px;border-radius:22px;box-shadow:inset 0 0 0 1.5px rgba(190,205,210,.33);pointer-events:none;"></div>
<svg width="3104" height="1828" viewBox="0 0 3104 1828" style="position:absolute;left:0;top:0;pointer-events:none">
<defs>
  <g id="cube">
    <path d="M13.4 0.3 L25.6 7 L13.4 13.7 L1.2 7 Z"/>
    <path d="M0 9 L12.3 15.8 L12.3 28 L0 21.2 Z"/>
    <path d="M26.8 9 L14.5 15.8 L14.5 28 L26.8 21.2 Z"/>
  </g>
  <filter id="tb" x="-5%" y="-5%" width="110%" height="110%"><feGaussianBlur stdDeviation="0.45"/></filter>
  <clipPath id="thumbclip"><rect x="2589.75" y="713.75" width="128" height="128.25" rx="13"/></clipPath>
  <clipPath id="inspclip"><rect x="2530" y="700" width="424" height="900"/></clipPath>
</defs>
<!-- close icon -->
<rect x="166.75" y="162" width="26.5" height="26" rx="5" fill="#fff"/>
<path d="M174.6 169.6 L185.4 180.4 M185.4 169.6 L174.6 180.4" stroke="#8b8b90" stroke-width="3.2" stroke-linecap="round" fill="none"/>
<!-- download -->
<g fill="none" stroke="#fff" stroke-width="3.4" stroke-linecap="round" stroke-linejoin="round">
  <path d="M1254 171.5 H1251.5 Q1248.5 171.5 1248.5 174.5 V186.7 Q1248.5 189.7 1251.5 189.7 H1268 Q1271 189.7 1271 186.7 V174.5 Q1271 171.5 1268 171.5 H1265.5"/>
  <path d="M1259.75 163.5 V181.5 M1254.3 176.6 L1259.75 182 L1265.2 176.6"/>
</g>
<!-- play triangle -->
<path d="M1340.5 164.5 L1360 175.4 L1340.5 186.3 Z" fill="#fff" stroke="#fff" stroke-width="3.5" stroke-linejoin="round"/>
<!-- share -->
<g fill="none" stroke="#fff" stroke-width="3.4" stroke-linecap="round" stroke-linejoin="round">
  <path d="M1494 171.5 H1491.2 Q1488.2 171.5 1488.2 174.5 V187.5 Q1488.2 190.5 1491.2 190.5 H1508 Q1511 190.5 1511 187.5 V174.5 Q1511 171.5 1508 171.5 H1505.2"/>
  <path d="M1499.6 182 V162 M1494.2 166.8 L1499.6 161.5 L1505 166.8"/>
</g>
<!-- camera -->
<g>
  <path d="M1571.5 165 H1576 L1578.2 162.3 Q1578.8 161.8 1579.8 161.8 H1588.2 Q1589.2 161.8 1589.8 162.3 L1592 165 H1596.5 Q1601.25 165 1601.25 169.7 V184.3 Q1601.25 189 1596.5 189 H1571.5 Q1566.75 189 1566.75 184.3 V169.7 Q1566.75 165 1571.5 165 Z" fill="#fff"/>
  <circle cx="1584" cy="177" r="7.4" fill="#9c9ba0"/>
  <circle cx="1584" cy="177" r="4.2" fill="#fff"/>
  <circle cx="1594.4" cy="171.6" r="1.8" fill="#9c9ba0"/>
</g>
<!-- sunrise -->
<g fill="none" stroke="#fff" stroke-width="3.1" stroke-linecap="round">
  <path d="M2656.5 185.5 H2688.6"/>
  <path d="M2669.2 184.2 A5.9 5.9 0 1 1 2675.4 184.2" stroke-linecap="butt"/>
  <path d="M2672.3 165.6 V168.6 M2662.5 169.3 L2664.6 171.5 M2682.1 169.3 L2680 171.5 M2658.2 179 H2660.8 M2683.8 179 H2686.4"/>
</g>
<!-- bulb -->
<g fill="#fff">
  <path d="M2754.5 158.7 C2748.7 158.7 2744.5 163 2744.5 168.5 C2744.5 173.5 2747.8 176 2748.7 180 L2749.4 184 H2759.6 L2760.3 180 C2761.2 176 2764.5 173.5 2764.5 168.5 C2764.5 163 2760.3 158.7 2754.5 158.7 Z"/>
  <rect x="2749.4" y="185.6" width="10.2" height="2" rx="1"/>
  <rect x="2749.9" y="188.7" width="9.2" height="2" rx="1"/>
  <path d="M2751.3 191.6 H2757.7 Q2757.2 193.6 2754.5 193.6 Q2751.8 193.6 2751.3 191.6 Z"/>
</g>
<!-- ceiling lamp -->
<g fill="#fff">
  <path d="M2825.8 161.6 C2825.8 158 2840.6 158 2840.6 161.6 C2840.6 164.6 2835.6 165.2 2834.9 167.6 L2834.9 169.6 C2836.5 175 2846.6 178.5 2847.4 186.4 C2847.4 190.4 2841 192.4 2833.1 192.4 C2825.2 192.4 2818.7 190.4 2818.7 186.4 C2819.6 178.5 2829.7 175 2831.3 169.6 L2831.3 167.6 C2830.6 165.2 2825.8 164.6 2825.8 161.6 Z"/>
  <ellipse cx="2833.1" cy="186.5" rx="11.1" ry="3.9" fill="#9c9ba0"/>
  <path d="M2827.7 183.9 H2838.3 Q2837.6 187.2 2833 187.2 Q2828.4 187.2 2827.7 183.9 Z"/>
</g>
<!-- rect inset -->
<rect x="2903.8" y="163.7" width="30.7" height="23.3" rx="3.6" fill="none" stroke="#fff" stroke-width="3.4"/>
<rect x="2907.6" y="167.8" width="23.4" height="15.4" rx="1" fill="#fff"/>
<!-- scene graph +/- -->
<path d="M421.5 302 H436.3 M428.9 294.6 V309.4" stroke="#404b51" stroke-width="2.6" stroke-linecap="round"/>
<path d="M479.3 302 H494.3" stroke="#404b51" stroke-width="2.6" stroke-linecap="round"/>
<!-- cubes -->
<use href="#cube" x="162.5" y="367.5" fill="#9c9ba0"/>
<use href="#cube" x="162.5" y="439.5" fill="#9c9ba0"/>
<use href="#cube" x="162.5" y="511.7" fill="#fff"/>
<use href="#cube" x="880.7" y="1610.75" fill="#9c9ba0"/>
<!-- folder button icon -->
<g fill="none" stroke="#f2f2f2" stroke-width="2.4" stroke-linejoin="round" stroke-linecap="round">
  <path d="M613 1241.5 V1219 Q613 1216.2 615.8 1216.2 H621.5 Q623 1216.2 624.2 1217 L626.6 1218.8 Q627.8 1219.6 629.3 1219.6 H645.2 Q648 1219.6 648 1222.4 V1240.5 Q648 1243.3 645.2 1243.3 H615.8 Q613 1243.3 613 1240.5 Z"/>
  <path d="M613 1225.6 H648"/>
</g>
<!-- move icon -->
<g stroke="#e8e8e8" stroke-width="2.8" stroke-linecap="round" fill="#e8e8e8" stroke-linejoin="round">
  <path d="M1483.75 1220 V1241.5 M1473 1230.75 H1494.5" fill="none"/>
  <path d="M1483.75 1216.6 L1488.4 1222.2 H1479.1 Z M1483.75 1244.9 L1488.4 1239.3 H1479.1 Z M1469.6 1230.75 L1475.2 1226.1 V1235.4 Z M1497.9 1230.75 L1492.3 1226.1 V1235.4 Z" stroke-width="1.2"/>
</g>
<!-- globe/rotate -->
<g fill="none" stroke="#e8e8e8" stroke-width="2.1">
  <circle cx="1557.8" cy="1231" r="11.9"/>
  <path d="M1557.2 1219 Q1552.8 1231 1556.4 1243"/>
  <path d="M1546 1232.6 Q1557.8 1238.2 1569.6 1232.6"/>
</g>
<!-- zoom -->
<g fill="none" stroke="#e8e8e8" stroke-width="2.3" stroke-linecap="round">
  <circle cx="1628.3" cy="1228.2" r="9.2"/>
  <path d="M1635.4 1235.6 L1641.8 1242" stroke-width="3"/>
  <path d="M1625.6 1225.4 L1631 1230.8" stroke-width="2"/>
  <path d="M1624.6 1228.2 V1224.4 H1628.4 M1632 1228 V1231.8 H1628.2" stroke-width="1.8" stroke-linejoin="round"/>
</g>
<!-- import plus.circle -->
<g fill="none" stroke="#fff" stroke-width="2.2" stroke-linecap="round">
  <circle cx="939" cy="1394.25" r="11.6"/>
  <path d="M933.4 1394.25 H944.6 M939 1388.65 V1399.85"/>
</g>
<!-- set path drive icon -->
<g fill="#fff">
  <path d="M2262.5 1381 H2277.5 Q2279 1381 2279.6 1382.3 L2283.6 1391 H2256.4 L2260.4 1382.3 Q2261 1381 2262.5 1381 Z"/>
  <path d="M2256 1392.6 H2279.5 Q2284 1392.6 2284 1397.2 V1398.8 Q2284 1403.4 2279.5 1403.4 H2256 Z"/>
  <circle cx="2278" cy="1398" r="1.7" fill="#9c9ba0"/>
  <circle cx="2256.3" cy="1398.5" r="7.6" fill="#9c9ba0"/>
  <circle cx="2256.3" cy="1398.5" r="6" fill="#fff"/>
  <path d="M2252.6 1398.5 H2260 M2256.3 1394.8 V1402.2" stroke="#9c9ba0" stroke-width="1.7" stroke-linecap="round"/>
</g>
<!-- Models folder (filled blue) -->
<g fill="#0a84ff">
  <path d="M622.5 1541.5 V1538.2 Q622.5 1535 625.7 1535 H631.5 Q633 1535 634.2 1535.9 L636.4 1537.5 Q637.6 1538.4 639.1 1538.4 H648.8 Q652 1538.4 652 1541.5 Z"/>
  <path d="M622.5 1543.4 H652 V1555 Q652 1558.25 648.8 1558.25 H625.7 Q622.5 1558.25 622.5 1555 Z"/>
</g>
<!-- textures folder (filled gray) -->
<g fill="#9c9ba0">
  <path d="M880.75 1545.8 V1542.5 Q880.75 1539.25 884 1539.25 H889.8 Q891.3 1539.25 892.5 1540.1 L894.7 1541.7 Q895.9 1542.6 897.4 1542.6 H906.8 Q910 1542.6 910 1545.8 Z"/>
  <path d="M880.75 1547.7 H910 V1559.3 Q910 1562.5 906.8 1562.5 H884 Q880.75 1562.5 880.75 1559.3 Z"/>
</g>
<!-- Materials folder outline -->
<g fill="none" stroke="#9c9ba0" stroke-width="2.1" stroke-linejoin="round">
  <path d="M624 1646 V1630 Q624 1627.3 626.7 1627.3 H632 Q633.4 1627.3 634.5 1628.1 L636.6 1629.7 Q637.7 1630.5 639.1 1630.5 H648.3 Q651 1630.5 651 1633.2 V1645.5 Q651 1648.2 648.3 1648.2 H626.7 Q624 1648.2 624 1645.5 Z"/>
  <path d="M624 1635.6 H651"/>
</g>
<!-- assign plus.circle.fill -->
<circle cx="2798" cy="601" r="13" fill="#fff"/>
<path d="M2792 601 H2804 M2798 595 V607" stroke="#9c9ba0" stroke-width="2.6" stroke-linecap="round"/>
<!-- inspector clipped content -->
<g clip-path="url(#inspclip)">
  <!-- thumbnail -->
  <g clip-path="url(#thumbclip)" id="thumb"><g filter="url(#tb)">
    <rect x="2587.77" y="711.77" width="132.08" height="132.08" fill="#363636"/>
    <rect x="2617.96" y="735.36" width="10.38" height="80.19" fill="#4a433d"/>
    <rect x="2623.62" y="760.83" width="14.15" height="18.87" fill="#4a433d"/>
    <rect x="2636.83" y="729.70" width="16.04" height="25.47" fill="#4a433d"/>
    <rect x="2644.38" y="738.19" width="9.43" height="28.30" fill="#4a433d"/>
    <rect x="2637.77" y="824.04" width="16.04" height="17.92" fill="#4a433d"/>
    <rect x="2660.42" y="753.28" width="8.49" height="22.64" fill="#4a433d"/>
    <rect x="2641.55" y="787.25" width="8.49" height="16.04" fill="#4a433d"/>
    <rect x="2632.11" y="802.34" width="5.66" height="13.21" fill="#4a433d"/>
    <rect x="2691.55" y="818.38" width="8.49" height="15.09" fill="#4a433d"/>
    <rect x="2608.53" y="775.92" width="6.60" height="15.09" fill="#4a433d"/>
    <rect x="2625.51" y="713.85" width="2.83" height="21.51" fill="#4a433d"/>
    <rect x="2653.81" y="814.60" width="6.60" height="9.43" fill="#4a433d"/>
    <rect x="2667.02" y="809.89" width="4.72" height="9.43" fill="#4a433d"/>
    <rect x="2607.11" y="719.79" width="14.15" height="6.13" fill="#fed4bb"/>
    <rect x="2627.87" y="719.79" width="4.25" height="28.30" fill="#fed4bb"/>
    <rect x="2637.30" y="713.85" width="15.57" height="16.79" fill="#fed4bb"/>
    <rect x="2604.28" y="740.08" width="3.77" height="9.43" fill="#fed4bb"/>
    <rect x="2617.96" y="753.28" width="3.30" height="12.74" fill="#fed4bb"/>
    <rect x="2604.28" y="759.89" width="3.30" height="8.49" fill="#fed4bb"/>
    <rect x="2642.02" y="766.02" width="3.77" height="21.70" fill="#fed4bb"/>
    <rect x="2632.11" y="777.81" width="5.66" height="23.11" fill="#fed4bb"/>
    <rect x="2608.06" y="791.02" width="4.72" height="14.62" fill="#fed4bb"/>
    <rect x="2612.30" y="775.92" width="5.66" height="20.75" fill="#fed4bb"/>
    <rect x="2621.26" y="793.85" width="2.83" height="11.79" fill="#fed4bb"/>
    <rect x="2652.87" y="724.04" width="11.32" height="12.26" fill="#fed4bb"/>
    <rect x="2654.28" y="741.02" width="8.02" height="14.15" fill="#fed4bb"/>
    <rect x="2654.28" y="777.81" width="13.68" height="13.21" fill="#fed4bb"/>
    <rect x="2650.04" y="787.25" width="4.25" height="15.09" fill="#fed4bb"/>
    <rect x="2646.26" y="802.34" width="22.64" height="12.26" fill="#fed4bb"/>
    <rect x="2637.77" y="814.60" width="15.57" height="11.32" fill="#fed4bb"/>
    <rect x="2671.74" y="811.77" width="5.19" height="14.15" fill="#fed4bb"/>
    <rect x="2671.74" y="825.92" width="9.91" height="8.02" fill="#fed4bb"/>
    <rect x="2708.53" y="818.38" width="9.43" height="16.04" fill="#fed4bb"/>
    <rect x="2645.32" y="713.85" width="7.55" height="2.64" fill="#4a433d"/>
    <rect x="2607.11" y="713.85" width="16.04" height="5.94" fill="#ffffff"/>
    <rect x="2589.85" y="733.94" width="13.96" height="24.06" fill="#ffffff"/>
    <rect x="2589.85" y="766.02" width="17.26" height="24.06" fill="#ffffff"/>
    <rect x="2604.28" y="790.08" width="3.30" height="7.55" fill="#ffffff"/>
    <rect x="2653.34" y="735.36" width="10.38" height="7.55" fill="#ffffff"/>
    <rect x="2654.28" y="754.23" width="2.83" height="11.32" fill="#ffffff"/>
    <rect x="2655.70" y="765.55" width="4.25" height="12.26" fill="#ffffff"/>
    <rect x="2654.28" y="790.08" width="13.68" height="10.85" fill="#ffffff"/>
    <rect x="2638.25" y="802.34" width="8.02" height="13.21" fill="#ffffff"/>
    <rect x="2612.11" y="816.02" width="11.98" height="25.94" fill="#ffffff"/>
    <rect x="2701.92" y="713.85" width="13.68" height="5.94" fill="#ffffff"/>
    <rect x="2715.13" y="733.94" width="2.83" height="24.06" fill="#ffffff"/>
    <rect x="2715.13" y="766.02" width="2.83" height="24.06" fill="#ffffff"/>
    <rect x="2700.04" y="817.91" width="8.49" height="16.51" fill="#ffffff"/>
    <rect x="2701.92" y="834.42" width="14.15" height="7.55" fill="#ffffff"/>
    <rect x="2611.36" y="713.85" width="0.94" height="5.94" fill="#5aaee0"/>
    <rect x="2617.49" y="713.85" width="0.94" height="5.94" fill="#5aaee0"/>
    <rect x="2592.30" y="733.94" width="1.13" height="24.06" fill="#5aaee0"/>
    <rect x="2600.51" y="733.94" width="0.94" height="24.06" fill="#5aaee0"/>
    <rect x="2592.96" y="766.02" width="0.94" height="24.06" fill="#5aaee0"/>
    <rect x="2595.32" y="766.02" width="0.75" height="24.06" fill="#5aaee0"/>
    <rect x="2598.15" y="766.02" width="0.94" height="24.06" fill="#5aaee0"/>
    <rect x="2604.28" y="776.40" width="2.83" height="2.36" fill="#5aaee0"/>
    <rect x="2604.28" y="791.96" width="2.83" height="1.42" fill="#5aaee0"/>
    <rect x="2653.34" y="735.83" width="10.38" height="1.42" fill="#5aaee0"/>
    <rect x="2655.70" y="778.28" width="1.13" height="11.79" fill="#5aaee0"/>
    <rect x="2612.30" y="819.32" width="11.32" height="4.25" fill="#5aaee0"/>
    <rect x="2612.30" y="827.81" width="5.66" height="3.77" fill="#5aaee0"/>
    <rect x="2704.00" y="713.85" width="0.94" height="5.94" fill="#5aaee0"/>
    <rect x="2704.28" y="834.42" width="0.94" height="7.55" fill="#5aaee0"/>
    <rect x="2712.30" y="834.42" width="0.94" height="7.55" fill="#5aaee0"/>
    <rect x="2641.08" y="807.06" width="1.89" height="8.49" fill="#222"/>
    <rect x="2664.00" y="719.79" width="50.94" height="33.87" fill="#000000"/>
    <rect x="2668.91" y="752.91" width="46.04" height="57.83" fill="#000000"/>
    <rect x="2684.00" y="809.98" width="30.94" height="7.45" fill="#000000"/>
  </g></g>
  <!-- placeholder photo icon -->
  <g>
    <path fill-rule="evenodd" fill="#9c9ba0" d="M2852.5 713.75 H2960 V838.75 H2852.5 Q2837.75 838.75 2837.75 824 V728.5 Q2837.75 713.75 2852.5 713.75 Z M2855 725 Q2847 725 2847 733 V809.8 L2866.3 790.6 Q2869 788 2871.7 790.6 L2887.1 803.2 L2915.8 775.2 Q2919.5 771.6 2923.2 775.2 L2960 812.6 V725 Z"/>
    <ellipse cx="2878.25" cy="761" rx="12.9" ry="16" fill="#9c9ba0"/>
  </g>
  <!-- minus buttons -->
  <circle cx="2654" cy="873" r="13" fill="#ff453a"/>
  <path d="M2649 873 H2659" stroke="#3a454b" stroke-width="2.3" stroke-linecap="round"/>
  <circle cx="2902" cy="873" r="13" fill="#ff453a"/>
  <path d="M2897 873 H2907" stroke="#3a454b" stroke-width="2.3" stroke-linecap="round"/>
  <!-- stepper chevrons -->
  <path d="M2728 1037.6 L2734 1032 L2740 1037.6 M2728 1046.4 L2734 1052 L2740 1046.4" fill="none" stroke="#fff" stroke-width="2.6" stroke-linecap="round" stroke-linejoin="round"/>
</g>
<!-- color well -->
<rect x="2576.5" y="1218.75" width="75.5" height="33" rx="3.5" fill="#fff"/>
<path d="M2576.5 1222.25 Q2576.5 1218.75 2580 1218.75 H2652 L2576.5 1251.75 Z" fill="#000"/>
</svg>

<!-- text -->
<span class="t s" style="left:1430.27px;top:89.72px;font-size:27.62px;font-weight:700;color:#b6aba8;transform:scaleX(0.9767);">Untold Engine v0.2</span>
<span class="t s" style="left:1374.05px;top:163.93px;font-size:24.71px;font-weight:700;color:#ffffff;transform:scaleX(0.9500);">Play</span>
<span class="t s" style="left:164.09px;top:282.22px;font-size:37.06px;font-weight:700;color:#e4e5e5;transform:scaleX(0.9126);">Scene Graph</span>
<span class="t s" style="left:207.79px;top:369.83px;font-size:26.89px;font-weight:400;color:#e4e5e5;transform:scaleX(0.9631);">Game Camera</span>
<span class="t s" style="left:206.69px;top:441.83px;font-size:26.89px;font-weight:400;color:#e4e5e5;transform:scaleX(1.0301);">Directional Light</span>
<span class="t s" style="left:207.75px;top:513.58px;font-size:26.89px;font-weight:700;color:#ffffff;transform:scaleX(1.0024);">Entity_4</span>
<span class="t s" style="left:2521.03px;top:260.83px;font-size:26.89px;font-weight:400;color:#e4e5e5;transform:scaleX(0.9864);">Environme...</span>
<span class="t s" style="left:2714.89px;top:260.83px;font-size:26.89px;font-weight:400;color:#e4e5e5;transform:scaleX(1.0570);">Effects</span>
<span class="t s" style="left:2844.91px;top:260.83px;font-size:26.89px;font-weight:400;color:#e4e5e5;transform:scaleX(1.0463);">Inspector</span>
<span class="t s" style="left:2529.25px;top:342.72px;font-size:27.62px;font-weight:700;color:#e4e5e5;transform:scaleX(1.0000);">Inspector</span>
<span class="t s" style="left:2529.03px;top:429.08px;font-size:26.89px;font-weight:400;color:#e4e5e5;transform:scaleX(0.9855);">Name</span>
<span class="t s" style="left:2670.01px;top:429.08px;font-size:26.89px;font-weight:400;color:#e4e5e5;transform:scaleX(0.9947);">Entity_4</span>
<span class="t s" style="left:2708.21px;top:508.08px;font-size:26.89px;font-weight:400;color:#e4e5e5;transform:scaleX(1.0202);">Mesh</span>
<span class="t s" style="left:2554.97px;top:589.08px;font-size:26.89px;font-weight:400;color:#e4e5e5;transform:scaleX(1.0259);">blueshirtplayer</span>
<span class="t s" style="left:2826.00px;top:589.08px;font-size:26.89px;font-weight:400;color:#ffffff;transform:scaleX(0.9937);">Assign</span>
<span class="t s" style="left:2616.97px;top:661.77px;font-size:27.25px;font-weight:700;color:#e4e5e5;transform:scaleX(1.0134);">Material Properties</span>
<span class="t s" style="left:2600.36px;top:914.02px;font-size:22.53px;font-weight:400;color:#e4e5e5;transform:scaleX(0.9432);">Base Color</span>
<span class="t s" style="left:2554.50px;top:990.14px;font-size:21.80px;font-weight:400;color:#a1a7aa;transform:scaleX(0.9710);">Wrap Mode</span>
<span class="t s" style="left:2585.05px;top:1027.83px;font-size:26.89px;font-weight:400;color:#e4e5e5;transform:scaleX(0.9735);">Repeat</span>
<span class="t s" style="left:2621.54px;top:1102.06px;font-size:25.44px;font-weight:400;color:#a1a7aa;transform:scaleX(0.9806);">UV Scale</span>
<span class="t s" style="left:2762.14px;top:1115.83px;font-size:26.89px;font-weight:400;color:#e4e5e5;transform:scaleX(0.9286);">1.0</span>
<span class="t s" style="left:2553.54px;top:1267.14px;font-size:21.80px;font-weight:400;color:#e4e5e5;transform:scaleX(0.9650);">Base Color</span>
<span class="t s" style="left:2704.02px;top:1236.08px;font-size:26.89px;font-weight:400;color:#e4e5e5;transform:scaleX(0.9792);">0.5</span>
<span class="t s" style="left:2840.01px;top:1236.08px;font-size:26.89px;font-weight:400;color:#e4e5e5;transform:scaleX(0.9861);">0.0</span>
<span class="t s" style="left:2688.54px;top:1288.39px;font-size:21.80px;font-weight:400;color:#a1a7aa;transform:scaleX(0.9587);">Roughness</span>
<span class="t s" style="left:2839.49px;top:1288.39px;font-size:21.80px;font-weight:400;color:#a1a7aa;transform:scaleX(1.0068);">Metallic</span>
<span class="t s" style="left:2568.01px;top:1369.08px;font-size:26.89px;font-weight:400;color:#e4e5e5;transform:scaleX(0.9861);">0.0</span>
<span class="t s" style="left:2704.01px;top:1369.08px;font-size:26.89px;font-weight:400;color:#e4e5e5;transform:scaleX(0.9861);">0.0</span>
<span class="t s" style="left:2840.01px;top:1369.08px;font-size:26.89px;font-weight:400;color:#e4e5e5;transform:scaleX(0.9861);">0.0</span>
<span class="t s" style="left:2696.29px;top:1422.14px;font-size:21.80px;font-weight:400;color:#a1a7aa;transform:scaleX(0.9597);">Emmisive</span>
<span class="t s" style="left:2615.25px;top:1473.27px;font-size:27.25px;font-weight:400;color:#e4e5e5;transform:scaleX(0.9961);">Transform Properties</span>
<span class="t s" style="left:2545.05px;top:1529.22px;font-size:27.62px;font-weight:700;color:#e4e5e5;transform:scaleX(0.9741);">Position</span>
<span class="t s" style="left:2547.00px;top:1604.85px;font-size:28.34px;font-weight:400;color:#e4e5e5;transform:scaleX(0.9518);">Add Components</span>
<span class="t s" style="left:1407.00px;top:1287.52px;font-size:27.25px;font-weight:400;color:#e4e5e5;transform:scaleX(0.9784);">Assets</span>
<span class="t s" style="left:1532.02px;top:1287.52px;font-size:27.25px;font-weight:400;color:#e4e5e5;transform:scaleX(0.9847);">Console</span>
<span class="t s" style="left:606.04px;top:1377.01px;font-size:35.25px;font-weight:700;color:#e4e5e5;transform:scaleX(0.9583);">Assets</span>
<span class="t s" style="left:756.22px;top:1381.27px;font-size:27.25px;font-weight:400;color:#ffffff;transform:scaleX(1.0167);">Import Asset</span>
<span class="t s" style="left:2299.04px;top:1381.22px;font-size:27.62px;font-weight:700;color:#ffffff;transform:scaleX(0.9630);">Set Path</span>
<span class="t s" style="left:605.73px;top:1453.06px;font-size:20.71px;font-weight:400;color:#32d74b;transform:scaleX(1.0241);">Current Path: DemoGameAssets</span>
<span class="t m" style="left:670.79px;top:1535.63px;font-size:29.98px;font-weight:700;color:#0a84ff;transform:scaleX(0.9623);-webkit-text-stroke:0.7px #0a84ff;">Models</span>
<span class="t m" style="left:670.80px;top:1608.88px;font-size:29.98px;font-weight:700;color:#e4e5e5;transform:scaleX(0.9520);-webkit-text-stroke:0.7px #e4e5e5;">Materia</span>
<span class="t m" style="left:928.54px;top:1539.92px;font-size:29.60px;font-weight:400;color:#e4e5e5;transform:scaleX(0.9783);-webkit-text-stroke:0.35px #e4e5e5;">textures</span>
<span class="t m" style="left:924.79px;top:1612.92px;font-size:29.60px;font-weight:400;color:#e4e5e5;transform:scaleX(0.9793);-webkit-text-stroke:0.35px #e4e5e5;">blueshirtplayer.usdc</span>
<div class="a" style="left:2530px;top:700px;width:424px;height:900px;overflow:hidden;"><span class="t s" style="left:317.64px;top:214.02px;font-size:22.53px;font-weight:400;color:#e4e5e5;transform:scaleX(0.9295);">Roughness</span></div>
<div class="a" style="left:2530px;top:700px;width:424px;height:900px;overflow:hidden;"><span class="t s" style="left:272.50px;top:290.14px;font-size:21.80px;font-weight:400;color:#a1a7aa;transform:scaleX(0.9710);">Wrap Mode</span></div>
<div class="a" style="left:2530px;top:700px;width:424px;height:900px;overflow:hidden;"><span class="t s" style="left:302.55px;top:327.83px;font-size:26.89px;font-weight:400;color:#e4e5e5;transform:scaleX(0.9735);">Repeat</span></div>
<div class="a" style="left:586.25px;top:1502px;width:240.0px;height:151.75px;overflow:hidden;"><span class="t m" style="left:82.31px;top:142.63px;font-size:29.98px;font-weight:700;color:#e4e5e5;transform:scaleX(1.0625);-webkit-text-stroke:0.7px #e4e5e5;">ls</span></div></body>
</html>
